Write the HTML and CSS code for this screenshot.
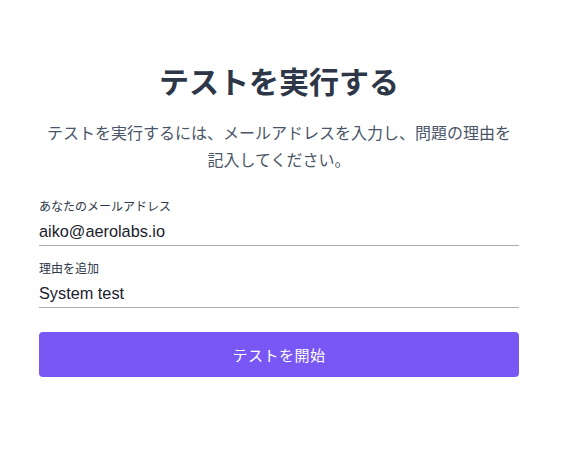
FILE: index.html
```html
<!DOCTYPE html>
<html lang="ja">
<head>
<meta charset="utf-8">
<link rel="stylesheet" href="styles.css">
</head>
<body>
<main class="card">
  <h1 class="title">テストを実行する</h1>
  <p class="lead">テストを実行するには、メールアドレスを入力し、問題の理由を記入してください。</p>
  <form class="form">
    <label class="field">
      <span class="label">あなたのメールアドレス</span>
      <input class="input" type="text" value="aiko@aerolabs.io">
    </label>
    <label class="field">
      <span class="label">理由を追加</span>
      <input class="input" type="text" value="System test">
    </label>
    <button class="button" type="button">テストを開始</button>
  </form>
</main>
</body>
</html>
```

FILE: styles.css
```css
html, body {
  margin: 0;
  background: #ffffff;
}
body {
  font-family: "Noto Sans CJK JP", sans-serif;
}
.card {
  width: 480px;
  margin-left: 39px;
  padding-top: 62px;
  display: flex;
  flex-direction: column;
}
.title {
  margin: 0;
  font-size: 30px;
  line-height: 36px;
  font-weight: 700;
  color: #2d3748;
  text-align: center;
}
.lead {
  margin: 21px 0 0;
  padding: 0 4px;
  font-size: 16px;
  line-height: 27px;
  letter-spacing: 0;
  color: #4a5568;
  text-align: center;
}
.form {
  margin-top: 25px;
  display: flex;
  flex-direction: column;
}
.field {
  display: flex;
  flex-direction: column;
  gap: 7px;
  margin-bottom: 14px;
}
.label {
  font-size: 12px;
  line-height: 16px;
  color: #2d3748;
}
.input {
  border: none;
  border-bottom: 1px solid #a9adb3;
  padding: 0 0 4px;
  margin: 0;
  font-family: "Liberation Sans", Arial, sans-serif;
  font-size: 16.3px;
  line-height: 20px;
  height: 25px;
  box-sizing: border-box;
  color: #1a202c;
  background: transparent;
  outline: none;
}
.button {
  margin-top: 10px;
  height: 45px;
  border: none;
  border-radius: 4px;
  background: #7857f5;
  color: #ffffff;
  font-family: "Noto Sans CJK JP", sans-serif;
  font-size: 15px;
  letter-spacing: 0.5px;
}
```
